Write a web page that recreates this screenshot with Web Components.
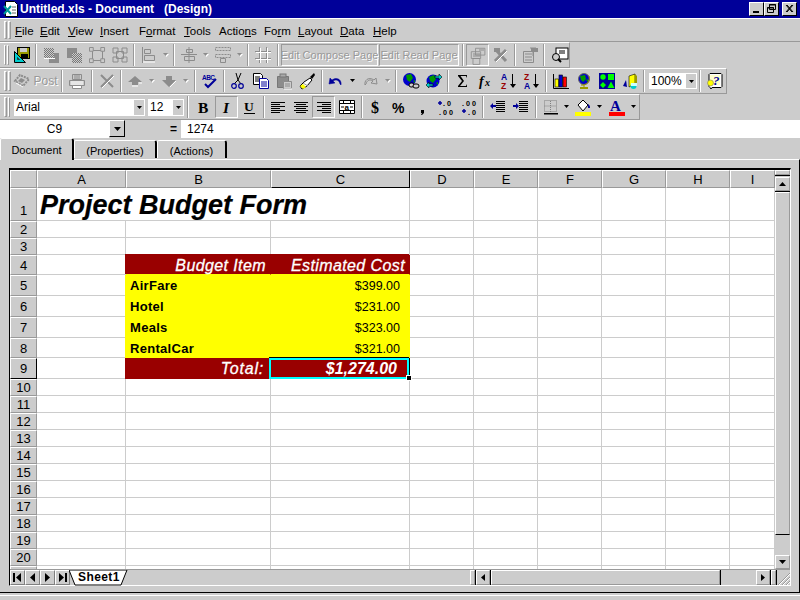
<!DOCTYPE html>
<html>
<head>
<meta charset="utf-8">
<title>Untitled.xls</title>
<style>
  html, body { margin: 0; padding: 0; background: #ccc; }
</style>
</head>
<body>
<xl-app>
  <title-bar>Untitled.xls - Document   (Design)</title-bar>
  <menu-bar>
    <menu-item w="25" key="0">File</menu-item>
    <menu-item w="28" key="0">Edit</menu-item>
    <menu-item w="32" key="0">View</menu-item>
    <menu-item w="39" key="0">Insert</menu-item>
    <menu-item w="45" key="1">Format</menu-item>
    <menu-item w="35" key="0">Tools</menu-item>
    <menu-item w="45" key="5">Actions</menu-item>
    <menu-item w="34" key="2">Form</menu-item>
    <menu-item w="42" key="0">Layout</menu-item>
    <menu-item w="33" key="0">Data</menu-item>
    <menu-item w="30" key="0">Help</menu-item>
  </menu-bar>

  <tool-bar w="570">
    <tb-btn icon="save"></tb-btn><tb-sep></tb-sep>
    <tb-btn icon="front"></tb-btn><tb-btn icon="back"></tb-btn><tb-btn icon="group"></tb-btn><tb-btn icon="ungroup"></tb-btn><tb-sep></tb-sep>
    <tb-btn icon="alignv"></tb-btn><tb-arrow off></tb-arrow><tb-sep></tb-sep>
    <tb-btn icon="alignh"></tb-btn><tb-arrow off></tb-arrow>
    <tb-btn icon="spread"></tb-btn><tb-arrow off></tb-arrow><tb-sep></tb-sep>
    <tb-btn icon="gridlines"></tb-btn><tb-sep w="7"></tb-sep>
    <tb-text w="97">Edit Compose Page</tb-text><tb-text w="80" gap="1">Edit Read Page</tb-text><tb-sep w="7"></tb-sep>
    <tb-btn icon="form" pressed></tb-btn><tb-btn icon="tools"></tb-btn><tb-sep></tb-sep>
    <tb-btn icon="props"></tb-btn><tb-sep></tb-sep>
    <tb-btn icon="preview"></tb-btn>
  </tool-bar>

  <tool-bar w="727">
    <tb-btn w="46" icon="post" label="Post"></tb-btn><tb-sep></tb-sep>
    <tb-btn w="24" icon="print"></tb-btn><tb-sep></tb-sep>
    <tb-btn icon="cross"></tb-btn><tb-sep w="5"></tb-sep>
    <tb-btn icon="up"></tb-btn><tb-arrow off></tb-arrow>
    <tb-btn icon="down"></tb-btn><tb-arrow off></tb-arrow><tb-sep w="7"></tb-sep>
    <tb-btn icon="spell"></tb-btn><tb-sep w="5"></tb-sep>
    <tb-btn icon="cut"></tb-btn><tb-btn icon="copy"></tb-btn><tb-btn icon="paste"></tb-btn><tb-btn icon="brush"></tb-btn><tb-sep w="7"></tb-sep>
    <tb-btn w="21" icon="undo"></tb-btn><tb-arrow w="12"></tb-arrow>
    <tb-btn icon="redo"></tb-btn><tb-arrow w="12" off></tb-arrow><tb-sep></tb-sep>
    <tb-btn icon="globelink"></tb-btn><tb-btn icon="globeweb"></tb-btn><tb-sep></tb-sep>
    <tb-btn icon="sigma"></tb-btn><tb-btn icon="fx"></tb-btn><tb-btn icon="az"></tb-btn><tb-btn icon="za"></tb-btn><tb-sep></tb-sep>
    <tb-btn icon="chart"></tb-btn><tb-btn icon="map"></tb-btn><tb-btn icon="shapes"></tb-btn><tb-btn icon="office"></tb-btn><tb-sep></tb-sep>
    <tb-combo w="48" gap="2" arrow="11" h="16">100%</tb-combo><tb-sep w="6"></tb-sep>
    <tb-btn icon="help"></tb-btn>
  </tool-bar>

  <tool-bar w="640">
    <tb-combo w="131" gap="2" arrow="11">Arial</tb-combo>
    <tb-combo w="36" gap="3" arrow="11">12</tb-combo><tb-sep w="8"></tb-sep>
    <tb-btn icon="bold"></tb-btn><tb-btn icon="italic" pressed></tb-btn><tb-btn icon="under"></tb-btn><tb-sep w="5"></tb-sep>
    <tb-btn icon="left"></tb-btn><tb-btn icon="center"></tb-btn><tb-btn icon="right" pressed></tb-btn><tb-btn icon="merge"></tb-btn><tb-sep w="7"></tb-sep>
    <tb-btn icon="dollar"></tb-btn><tb-btn icon="percent"></tb-btn><tb-btn icon="comma"></tb-btn><tb-btn icon="incdec"></tb-btn><tb-btn icon="decdec"></tb-btn><tb-sep></tb-sep>
    <tb-btn icon="outdent"></tb-btn><tb-btn icon="indent"></tb-btn><tb-sep w="7"></tb-sep>
    <tb-btn icon="borders"></tb-btn><tb-arrow w="9"></tb-arrow>
    <tb-btn icon="fill"></tb-btn><tb-arrow></tb-arrow>
    <tb-btn icon="fontcolor"></tb-btn><tb-arrow></tb-arrow>
  </tool-bar>

  <formula-bar name="C9" value="1274"></formula-bar>

  <tab-strip>
    <tab-item w="74" active>Document</tab-item>
    <tab-item w="83">(Properties)</tab-item>
    <tab-item w="70">(Actions)</tab-item>
  </tab-strip>

  <sheet-panel>
    <sheet-grid slot="grid"></sheet-grid>
    <v-scroll slot="vscroll"></v-scroll>
    <sheet-footer slot="footer"></sheet-footer>
  </sheet-panel>
</xl-app>

<script>
// checker used by the greyed out toolbar icons
const DITHER = '<pattern id="dt" width="2" height="2" patternUnits="userSpaceOnUse"><rect width="2" height="2" fill="#ccc"/><rect width="1" height="1" fill="#777"/><rect x="1" y="1" width="1" height="1" fill="#777"/></pattern>';
const GR = '#8c8c8c';
const lines = (arr, c) => arr.map(([x, y, w]) => `<rect x="${x}" y="${y}" width="${w}" height="1" fill="${c}"/>`).join('');

const ICONS = {
  save: `<rect x="3" y="0" width="13" height="12" fill="#000"/><rect x="4" y="1" width="11" height="10" fill="#999900"/><rect x="6" y="1" width="7" height="4" fill="#ccc"/><rect x="7" y="7" width="7" height="4" fill="#000"/><path d="M.5 4.5v11h11z" fill="#00cccc" stroke="#000"/><path d="M3.5 10.5v2h2z" fill="#ccc" stroke="#000" stroke-width=".7"/>`,
  front: `${DITHER}<rect x="6" y="6" width="10" height="10" fill="${GR}"/><rect x="1" y="1" width="10" height="10" fill="url(#dt)"/><path d="M11 11.5h1M1 11.5h10" stroke="#fff"/>`,
  back: `${DITHER}<rect x="1" y="1" width="10" height="10" fill="${GR}"/><rect x="6" y="6" width="10" height="10" fill="url(#dt)"/>`,
  group: `<path d="M3.5 3.5h10v10h-10z" fill="none" stroke="${GR}"/><path d="M0 0h4v4H0zM12 0h4v4h-4zM0 12h4v4H0zM12 12h4v4h-4z" fill="#ccc" stroke="${GR}" transform="translate(.5 .5) scale(.94)"/>`,
  ungroup: `<path d="M4.5 4.5h7v7h-7z" fill="none" stroke="${GR}"/><path d="M1 1h5v5H1zM10 1h5v5h-5zM1 10h5v5H1zM10 10h5v5h-5z" fill="none" stroke="${GR}"/>`,
  alignv: `<path d="M1.5 0v16" stroke="${GR}"/><path d="M3.5 2.5h6v4h-6zM3.5 8.5h10v5h-10z" fill="#ccc" stroke="${GR}"/><path d="M2 15h12" stroke="#fff"/>`,
  alignh: `<path d="M0 7.5h16" stroke="${GR}"/><path d="M5.5 2.5h6v3h-6zM3.5 9.5h10v4h-10z" fill="#ccc" stroke="${GR}"/><path d="M8 0v16" stroke="${GR}"/>`,
  spread: `<path d="M.5 .5h15v3H.5zM.5 7.5h15v3H.5z" fill="none" stroke="${GR}" stroke-dasharray="2 1"/><path d="M5.5 11.5h5v4h-5z" fill="#ccc" stroke="${GR}"/>`,
  gridlines: `<path d="M4.5 0v16M11.5 0v16M0 4.5h16M0 11.5h16" stroke="${GR}"/><path d="M5.5 1v15M12.5 1v15M1 5.5h15M1 12.5h15" stroke="#fff"/>`,
  form: `<path d="M6.5 1.5h11v8h-11zM1.5 5.5h11v8h-11zM3.5 13.5h8v7h-8z" fill="#ccc" stroke="${GR}" transform="scale(.85)"/><path d="M3 7h7M3 9h7M9 3h5" stroke="${GR}"/>`,
  tools: `<path d="M2 14L13 3M3 3l10 11" stroke="${GR}" stroke-width="3"/><path d="M3 15L14 4" stroke="#fff"/><rect x="1" y="1" width="6" height="4" fill="${GR}"/>`,
  props: `<path d="M1.5 4.5h10v11h-10z" fill="#ccc" stroke="${GR}"/><path d="M3 7h7M3 10h7M3 13h7M8 1h6M11 1v8" stroke="${GR}"/><rect x="9" y="1" width="7" height="4" fill="${GR}"/>`,
  preview: `<rect x="5" y="1" width="12" height="11" fill="#fff" stroke="#000"/><path d="M8 4h6M8 6h6" stroke="#000"/><circle cx="5" cy="10" r="3.5" fill="#ccc" stroke="#000"/><path d="M7 12l3 3" stroke="#000" stroke-width="2"/>`,
  post: `<path d="M1 8l5-6 9 4-6 7z" fill="none" stroke="${GR}" stroke-width="2" stroke-dasharray="2 1"/><path d="M4 8l3-3 4 2-3 3z" fill="${GR}"/><path d="M2 10l7 4" stroke="#fff"/>`,
  print: `<path d="M3.5 1.5h9v5h-9z" fill="#ccc" stroke="${GR}"/><path d="M5 3h6M5 5h6" stroke="${GR}"/><path d="M.5 7.5h15v5H.5z" fill="#ccc" stroke="${GR}"/><path d="M2 9h12M2 11h12" stroke="#fff"/><path d="M3.5 12.5h9v3h-9z" fill="#fff" stroke="${GR}"/>`,
  cross: `<path d="M2 2l12 12M14 2L2 14" stroke="${GR}" stroke-width="2"/><path d="M3 15L15 3" stroke="#fff"/>`,
  up: `<path d="M8 3L1 9h4v3h6V9h4z" fill="${GR}"/><path d="M5 13h6M12 10h3" stroke="#fff"/>`,
  down: `<path d="M8 14L1 7h4V3h6v4h4z" fill="${GR}"/><path d="M9 14l6-6" stroke="#fff"/>`,
  spell: `<text x="0" y="6.5" font-family="Liberation Sans" font-size="6.5" font-weight="bold" fill="#000099" textLength="13">ABC</text><path d="M3 11l3 3 8-8" fill="none" stroke="#000099" stroke-width="2"/>`,
  cut: `<path d="M6 0l2 7M11 0L8 7M8 7L4 11M8 7l3 4" fill="none" stroke="#000"/><circle cx="4" cy="13" r="2.3" fill="none" stroke="#000099" stroke-width="1.2"/><circle cx="11" cy="13" r="2.3" fill="none" stroke="#000099" stroke-width="1.2"/>`,
  copy: `<path d="M.5 .5h7l2 2v9H.5z" fill="#fff" stroke="#000"/><path d="M2 4h5M2 6h5M2 8h5" stroke="#000"/><path d="M6.5 5.5h7l2 2v8h-9z" fill="#fff" stroke="#000099"/><path d="M8 9h6M8 11h6M8 13h6" stroke="#000099"/>`,
  paste: `<path d="M1.5 3.5h11v11h-11z" fill="${GR}" stroke="#777"/><rect x="4" y="1" width="6" height="3" fill="#aaa" stroke="#777"/><path d="M7.5 8.5h8v7h-8z" fill="#ccc" stroke="${GR}"/><path d="M9 11h5M9 13h5" stroke="${GR}"/><path d="M8 16h8" stroke="#fff"/>`,
  brush: `<path d="M11 5l2 2-5 6-5 3-2-3 4-4z" fill="#fff" stroke="#000"/><path d="M1 13l3 3 3-2-3-3z" fill="#ffff00"/><path d="M11 4l4-4 1 2-3 4z" fill="#000"/><path d="M4 10l5 3" stroke="#999"/>`,
  undo: `<path d="M2 5l-1 6 6-1-2-2c3-2 6-1 7 3l1 1c1-4-3-9-9-5z" fill="#000099" stroke="#000099" stroke-width=".5"/>`,
  redo: `<path d="M14 5l1 6-6-1 2-2c-3-2-6-1-7 3l-1 1C2 8 6 3 12 7z" fill="#ccc" stroke="${GR}"/>`,
  globelink: `<circle cx="6.5" cy="6.5" r="6.5" fill="#0000cc"/><path d="M3 2l5-1 2 4-3 4-3-2zM10 8l2-1 0 3z" fill="#009900"/><rect x="6" y="10" width="5" height="4" rx="2" fill="#ccc" stroke="#000"/><rect x="10" y="11" width="6" height="4" rx="2" fill="#ccc" stroke="#000"/>`,
  globeweb: `<circle cx="7" cy="8" r="6.5" fill="#0000cc"/><path d="M3 4l5-2 2 4-3 4-3-2zM10 10l2-1 0 3z" fill="#009900"/><path d="M9 3h4V1l3 3-3 3V5H9zM7 11H3V9l-3 3 3 3v-2h4z" fill="#00cccc" stroke="#000" stroke-width=".6"/>`,
  sigma: `<path d="M3 2h9v3l-1-2H5.500L9 8l-4 5h6l1-2v3H3v-1l4-5-4-5z" fill="#000"/>`,
  fx: `<text x="1" y="13" font-family="Liberation Serif" font-size="14" font-style="italic" font-weight="bold" fill="#000">f</text><text x="7" y="13" font-family="Liberation Serif" font-size="10" font-style="italic" font-weight="bold" fill="#000">x</text>`,
  az: `<text x="0" y="7" font-family="Liberation Sans" font-size="8.5" font-weight="bold" fill="#000099">A</text><text x="0" y="15.5" font-family="Liberation Sans" font-size="8.5" font-weight="bold" fill="#990000">Z</text><path d="M11.5 1v13" stroke="#000" stroke-width="1"/><path d="M9 11h6l-3 4z" fill="#000"/>`,
  za: `<text x="0" y="7" font-family="Liberation Sans" font-size="8.5" font-weight="bold" fill="#990000">Z</text><text x="0" y="15.5" font-family="Liberation Sans" font-size="8.5" font-weight="bold" fill="#000099">A</text><path d="M11.5 1v13" stroke="#000"/><path d="M9 11h6l-3 4z" fill="#000"/>`,
  chart: `<path d="M.5 1v14.5H16" fill="none" stroke="#000"/><rect x="2" y="6" width="3.5" height="8" fill="#ffff00" stroke="#000" stroke-width=".6"/><rect x="6" y="2" width="3.5" height="12" fill="#0000cc" stroke="#000" stroke-width=".6"/><rect x="10" y="4" width="3.5" height="10" fill="#ff0000" stroke="#000" stroke-width=".6"/>`,
  map: `<circle cx="8" cy="6" r="5.5" fill="#0000cc" stroke="#666"/><path d="M4 3l5-1 1 4-3 3-2-2zM10 7l2-1 0 3z" fill="#009900"/><path d="M13 3a7 7 0 0 1-8 9M8 12v2" fill="none" stroke="#999900"/><path d="M4 15h8" stroke="#999900" stroke-width="2"/>`,
  shapes: `<rect width="16" height="16" fill="#000099"/><circle cx="4" cy="4" r="2.7" fill="#00ff00"/><rect x="9" y="1" width="6" height="6" fill="#00ff00"/><path d="M4 9l3 3-3 3-3-3zM12 8.500l3.500 6.500h-7z" fill="#00ff00"/>`,
  office: `<path d="M7 3l6-2v10l-6 3z" fill="#ffff00" stroke="#000" stroke-width=".6"/><path d="M13 1l2 2v9l-2-1z" fill="#999900"/><path d="M1 13l3-6 1 7z" fill="#000099"/><circle cx="11.500" cy="13" r="3" fill="#00cccc"/><rect x="9" y="10" width="6" height="3" fill="#ccffff"/>`,
  help: `<path d="M3 .5h11l1 1v12l-1 1H5l-1 1.500-1-1.500-1-1V1.500z" fill="#fff" stroke="#000"/><path d="M3 2h10v10H3z" fill="#ffffcc"/><text x="6" y="12" font-family="Liberation Serif" font-size="13" font-weight="bold" font-style="italic" fill="#000099">?</text><circle cx="3.500" cy="10" r="3" fill="#ffff00" stroke="#666" stroke-width=".5"/>`,
  bold: `<text x="2" y="14" font-family="Liberation Serif" font-size="15.500" font-weight="bold" fill="#000">B</text>`,
  italic: `<text x="4" y="14" font-family="Liberation Serif" font-size="15.500" font-weight="bold" font-style="italic" fill="#000">I</text>`,
  under: `<text x="2" y="12" font-family="Liberation Serif" font-size="13.500" font-weight="bold" fill="#000">U</text><rect x="2" y="14" width="11" height="1" fill="#000"/>`,
  left: lines([[1,3,14],[1,5,9],[1,7,14],[1,9,9],[1,11,14],[1,13,9]], '#000'),
  center: lines([[1,3,14],[3,5,10],[1,7,14],[3,9,10],[1,11,14],[3,13,10]], '#000'),
  right: lines([[1,3,14],[6,5,9],[1,7,14],[6,9,9],[1,11,14],[6,13,9]], '#000'),
  merge: `<path d="M.5 1.500h15v13H.5z" fill="#fff" stroke="#000"/><path d="M1 4.500h14M1 11.500h14M4.500 2v3M4.500 11v3M11.500 2v3M11.500 11v3" stroke="#000"/><path d="M2 8h3M14 8h-3" stroke="#000"/><text x="5.500" y="11" font-family="Liberation Sans" font-size="8" font-weight="bold" fill="#000">a</text>`,
  dollar: `<text x="2" y="14" font-family="Liberation Serif" font-size="16" font-weight="bold" fill="#000">$</text>`,
  percent: `<text x="0" y="13.500" font-family="Liberation Sans" font-size="14" font-weight="bold" fill="#000" textLength="15">%</text>`,
  comma: `<path d="M6 11h3v3l-2 2H6l1-2H6z" fill="#000"/>`,
  incdec: `<path d="M0 4h4M2 2v4" stroke="#000099" stroke-width="1.500"/><text x="5" y="6.500" font-family="Liberation Sans" font-size="7.200" font-weight="bold" fill="#000" textLength="8">.0</text><text x="1" y="15.500" font-family="Liberation Sans" font-size="7.200" font-weight="bold" fill="#000" textLength="14">.00</text>`,
  decdec: `<text x="1" y="6.500" font-family="Liberation Sans" font-size="7.200" font-weight="bold" fill="#000" textLength="14">.00</text><path d="M1 12h4M3 10v4" stroke="#000099" stroke-width="1.500"/><text x="7" y="15.500" font-family="Liberation Sans" font-size="7.200" font-weight="bold" fill="#000" textLength="8">.0</text>`,
  outdent: `${lines([[6,2,9],[6,4,9],[6,6,9],[6,8,9],[6,10,9],[6,12,9]], '#000')}<path d="M0 7l3-3v2h3v2H3v2z" fill="#000099"/>`,
  indent: `${lines([[6,2,9],[6,4,9],[6,6,9],[6,8,9],[6,10,9],[6,12,9]], '#000')}<path d="M6 7L3 4v2H0v2h3v2z" fill="#000099"/>`,
  borders: `<path d="M1.500 1.500h12v11h-12zM1.500 7h12M7.500 2v11" fill="none" stroke="#808080" stroke-dasharray="1 1"/><rect x="1" y="14" width="14" height="1.500" fill="#000"/>`,
  fill: `<path d="M3 6l5-5 5 5-5 6z" fill="#fff" stroke="#000"/><path d="M13 5c2 1 2 3 2 4h-2z" fill="#000099"/><rect x="0" y="13" width="16" height="4" fill="#ffff00"/>`,
  fontcolor: `<text x="1" y="12" font-family="Liberation Serif" font-size="15" font-weight="bold" fill="#000099">A</text><rect x="0" y="13" width="16" height="4" fill="#ff0000"/>`
};

class XlApp extends HTMLElement {
  constructor() {
    super();
    this.attachShadow({ mode: 'open' });
    this.shadowRoot.innerHTML = `
      <style>
        :host { display: flex; flex-direction: column; width: 800px; height: 600px; overflow: hidden; background: #ccc;
                font: 11px "Liberation Sans", Arial, sans-serif; color: #000; }
      </style>
      <slot></slot>`;
  }
}

class TitleBar extends HTMLElement {
  constructor() {
    super();
    this.attachShadow({ mode: 'open' });
    this.shadowRoot.innerHTML = `
      <style>
        :host { display: flex; align-items: center; height: 18px; background: #000099; color: #fff; flex: none;
                font: bold 12px "Liberation Sans", Arial, sans-serif; white-space: pre; box-sizing: border-box; padding: 0 3px; }
        svg.logo { width: 16px; height: 16px; margin-right: 1px; }
        .txt { flex: 1; }
        .w { width: 15px; height: 14px; background: #ccc; box-sizing: border-box; border: 1px solid; border-color: #fff #000 #000 #fff; display: flex; }
        .w svg { width: 13px; height: 12px; }
        .close { margin-left: 3px; }
      </style>
      <svg class="logo" viewBox="0 0 16 16"><path d="M2.500 .5h9l3 3v12h-12z" fill="#fff" stroke="#000"/><path d="M1 5l7 8M8 5l-7 8" stroke="#009999" stroke-width="2"/><path d="M9 6h4M9 9h4M9 12h4" stroke="#666"/></svg>
      <span class="txt"><slot></slot></span>
      <div class="w"><svg viewBox="0 0 13 12"><rect x="3" y="8" width="6" height="2" fill="#000"/></svg></div>
      <div class="w"><svg viewBox="0 0 13 12"><path d="M4.500 1.500h6v5h-6zM2.500 4.500h6v5h-6z" fill="#ccc" stroke="#000"/><path d="M4 2h7M2 5h7" stroke="#000"/></svg></div>
      <div class="w close"><svg viewBox="0 0 13 12"><path d="M3 2l6 7M9 2l-6 7M4 2l6 7M10 2l-6 7" stroke="#000"/></svg></div>`;
  }
}

class MenuBar extends HTMLElement {
  constructor() {
    super();
    this.attachShadow({ mode: 'open' });
    this.shadowRoot.innerHTML = `
      <style>
        :host { display: flex; align-items: center; height: 24px; flex: none; box-sizing: border-box; padding-left: 4px;
                background: #ccc; border-top: 1px solid #fff; border-bottom: 1px solid #999; }
        .grip { width: 3px; height: 18px; margin-right: 1px; border: 1px solid; border-color: #fff #999 #999 #fff; box-sizing: border-box; }
        .sp { width: 3px; }
      </style>
      <div class="grip"></div><div class="grip"></div><div class="sp"></div><slot></slot>`;
  }
}

class MenuItem extends HTMLElement {
  constructor() {
    super();
    this.attachShadow({ mode: 'open' });
  }
  connectedCallback() {
    const t = this.textContent;
    const k = +this.getAttribute('key');
    this.shadowRoot.innerHTML = `
      <style>
        :host { display: block; width: ${this.getAttribute('w')}px; font-size: 11.5px; white-space: nowrap; padding-top: 2px; }
        u { text-underline-offset: 1px; }
      </style>
      ${t.slice(0, k)}<u>${t[k]}</u>${t.slice(k + 1)}`;
  }
}

class ToolBar extends HTMLElement {
  constructor() {
    super();
    this.attachShadow({ mode: 'open' });
  }
  connectedCallback() {
    this.shadowRoot.innerHTML = `
      <style>
        :host { display: flex; align-items: center; flex: none; height: 26px; width: ${this.getAttribute('w')}px; box-sizing: border-box;
                padding-left: 4px; background: #ccc; border-top: 1px solid #fff; border-bottom: 1px solid #999; border-right: 1px solid #999; }
        .grip { width: 3px; height: 20px; margin-right: 1px; border: 1px solid; border-color: #fff #999 #999 #fff; box-sizing: border-box; }
        .sp { width: 2px; }
      </style>
      <div class="grip"></div><div class="grip"></div><div class="sp"></div><slot></slot>`;
  }
}

class TbBtn extends HTMLElement {
  constructor() {
    super();
    this.attachShadow({ mode: 'open' });
  }
  connectedCallback() {
    const w = this.getAttribute('w') || 23;
    const label = this.getAttribute('label');
    const pressed = this.hasAttribute('pressed');
    this.shadowRoot.innerHTML = `
      <style>
        :host { display: flex; flex: none; align-items: center; justify-content: center; width: ${w}px; height: 22px; box-sizing: border-box;
                ${pressed ? 'border: 1px solid; border-color: #999 #fff #fff #999;' : ''} }
        svg { width: 16px; height: 16px; overflow: visible; flex: none; }
        span { color: #999; text-shadow: 1px 1px 0 #fff; font-size: 12px; margin-left: 3px; }
      </style>
      <svg viewBox="0 0 16 16">${ICONS[this.getAttribute('icon')] || ''}</svg>${label ? `<span>${label}</span>` : ''}`;
  }
}

class TbSep extends HTMLElement {
  constructor() {
    super();
    this.attachShadow({ mode: 'open' });
  }
  connectedCallback() {
    this.shadowRoot.innerHTML = `
      <style>
        :host { display: flex; flex: none; justify-content: center; width: ${this.getAttribute('w') || 6}px; height: 22px; }
        i { display: block; width: 2px; box-sizing: border-box; border-left: 1px solid #999; border-right: 1px solid #fff; }
      </style><i></i>`;
  }
}

class TbArrow extends HTMLElement {
  constructor() {
    super();
    this.attachShadow({ mode: 'open' });
  }
  connectedCallback() {
    const off = this.hasAttribute('off');
    this.shadowRoot.innerHTML = `
      <style>
        :host { display: flex; flex: none; align-items: center; justify-content: center; width: ${this.getAttribute('w') || 11}px; height: 22px; }
        svg { width: 5px; height: 4px; overflow: visible; }
      </style>
      <svg viewBox="0 0 5 4">${off ? '<path d="M1 1h5L3.500 4z" fill="#fff"/>' : ''}<path d="M0 0h5L2.500 3z" fill="${off ? '#8c8c8c' : '#000'}"/></svg>`;
  }
}

class TbText extends HTMLElement {
  constructor() {
    super();
    this.attachShadow({ mode: 'open' });
  }
  connectedCallback() {
    this.shadowRoot.innerHTML = `
      <style>
        :host { display: flex; flex: none; align-items: center; justify-content: center; box-sizing: border-box; white-space: nowrap;
                width: ${this.getAttribute('w')}px; height: 22px; margin-left: ${this.getAttribute('gap') || 0}px;
                border: 1px solid; border-color: #999 #fff #fff #999; color: #999; text-shadow: 1px 1px 0 #fff; font-size: 11px; }
      </style><slot></slot>`;
  }
}

class TbCombo extends HTMLElement {
  constructor() {
    super();
    this.attachShadow({ mode: 'open' });
  }
  connectedCallback() {
    this.shadowRoot.innerHTML = `
      <style>
        :host { display: flex; flex: none; box-sizing: border-box; background: #fff; align-items: center; height: ${this.getAttribute('h') || 17}px;
                width: ${this.getAttribute('w')}px; margin-left: ${this.getAttribute('gap') || 0}px; font-size: 12px; }
        .t { flex: 1; padding-left: 2px; white-space: nowrap; overflow: hidden; }
        .a { flex: none; box-sizing: border-box; width: ${this.getAttribute('arrow')}px; height: 100%; background: #ccc; border: 1px solid #fff; border-left: none; display: flex; align-items: center; justify-content: center; }
        svg { width: 5px; height: 3px; }
      </style>
      <div class="t"><slot></slot></div>
      <div class="a"><svg viewBox="0 0 5 3"><path d="M0 0h5L2.500 3z" fill="#000"/></svg></div>`;
  }
}

class FormulaBar extends HTMLElement {
  constructor() {
    super();
    this.attachShadow({ mode: 'open' });
  }
  connectedCallback() {
    this.shadowRoot.innerHTML = `
      <style>
        :host { display: flex; flex: none; height: 18px; font-size: 12px; align-items: stretch; }
        .name { width: 109px; background: #fff; text-align: center; line-height: 18px; }
        .drop { width: 16px; height: 17px; box-sizing: border-box; background: #ccc; border: 1px solid; border-color: #fff #000 #000 #fff; display: flex; align-items: center; justify-content: center; }
        .drop svg { width: 7px; height: 4px; }
        .eq { width: 56px; text-align: right; padding-right: 4px; box-sizing: border-box; font-weight: bold; line-height: 18px; font-size: 12px; }
        .val { flex: 1; background: #fff; padding-left: 6px; line-height: 18px; }
      </style>
      <div class="name">${this.getAttribute('name')}</div>
      <div class="drop"><svg viewBox="0 0 7 4"><path d="M0 0h7L3.500 4z" fill="#000"/></svg></div>
      <div class="eq">=</div>
      <div class="val">${this.getAttribute('value')}</div>`;
  }
}

class TabStrip extends HTMLElement {
  constructor() {
    super();
    this.attachShadow({ mode: 'open' });
    this.shadowRoot.innerHTML = `
      <style>
        :host { display: flex; flex: none; height: 21px; align-items: flex-end; background: #ccc; position: relative; z-index: 1; }
      </style><slot></slot>`;
  }
}

class TabItem extends HTMLElement {
  constructor() {
    super();
    this.attachShadow({ mode: 'open' });
  }
  connectedCallback() {
    const on = this.hasAttribute('active');
    this.shadowRoot.innerHTML = `
      <style>
        :host { display: flex; flex: none; align-items: center; justify-content: center; box-sizing: border-box; width: ${this.getAttribute('w')}px;
                height: ${on ? 22 : 18}px; ${on ? 'margin-bottom:-1px; background:#ccc;' : 'margin-bottom: 1px; padding-top: 2px;'}
                border-top: 1px solid #fff; border-left: 1px solid #fff; border-right: 2px solid #000; border-radius: 2px 3px 0 0; font-size: 11px; }
      </style><slot></slot>`;
  }
}

class SheetPanel extends HTMLElement {
  constructor() {
    super();
    this.attachShadow({ mode: 'open' });
    this.shadowRoot.innerHTML = `
      <style>
        :host { display: block; flex: none; height: 441px; background: #ccc; }
        .inner { box-sizing: border-box; border-top: 1px solid #fff; border-right: 1px solid #000; border-bottom: 1px solid #000; padding: 8px 0 6px 9px; }
        .frame { display: grid; grid-template-columns: 765px 15px; grid-template-rows: 399px 16px; border-top: 2px solid #000; border-left: 1px solid #000; border-bottom: 1px solid #fff; border-right: 1px solid #fff; width: 782px; box-sizing: border-box; }
        .status { margin-top: 2px; border-top: 1px solid #fff; }
        ::slotted([slot="footer"]) { grid-column: 1 / 3; }
      </style>
      <div class="inner"><div class="frame"><slot name="grid"></slot><slot name="vscroll"></slot><slot name="footer"></slot></div></div>
      <div class="status"></div>`;
  }
}

class SheetGrid extends HTMLElement {
  constructor() {
    super();
    this.attachShadow({ mode: 'open' });
    const cols = [['A', 89], ['B', 145], ['C', 139], ['D', 64], ['E', 64], ['F', 64], ['G', 64], ['H', 64], ['I', 45]];
    const rowH = [33, 17, 17, 20, 21, 21, 21, 20, 21, 17, 17, 17, 17, 17, 17, 17, 17, 17, 17, 17, 17];
    const red = 'fill red', yel = 'fill yel';
    // cells with content or a fill, key is column + row
    const data = {
      A1: { cls: 'title nolines', t: 'Project Budget Form' }, B1: { cls: 'nolines' },
      B4: { cls: `${red} top hd`, t: 'Budget Item' }, C4: { cls: `${red} top hd`, t: 'Estimated Cost' },
      B5: { cls: `${yel} item`, t: 'AirFare' }, C5: { cls: `${yel} val`, t: '$399.00' },
      B6: { cls: `${yel} item`, t: 'Hotel' }, C6: { cls: `${yel} val`, t: '$231.00' },
      B7: { cls: `${yel} item`, t: 'Meals' }, C7: { cls: `${yel} val`, t: '$323.00' },
      B8: { cls: `${yel} item short`, t: 'RentalCar' }, C8: { cls: `${yel} val short`, t: '$321.00' },
      B9: { cls: `${red} tot`, t: 'Total:' }, C9: { cls: `${red} sum sel`, t: '$1,274.00' }
    };
    let html = '<div class="corner"></div>';
    cols.forEach(([c]) => { html += `<div class="hdr ${c === 'C' ? 'on' : ''}">${c}</div>`; });
    rowH.forEach((h, i) => {
      const r = i + 1;
      html += `<div class="hdr rh ${r === 9 ? 'on' : ''} ${r === 1 ? 'end' : ''}">${r < 21 ? r : ''}</div>`;
      cols.forEach(([c]) => {
        const d = data[c + r] || {};
        let cls = d.cls || '';
        if (r === 4 && d.t) cls += ' btm-yel';
        html += `<div class="c ${cls}"><span>${d.t || ''}</span>${cls.includes('sel') ? '<b class="selbox"></b><b class="handle"></b>' : ''}</div>`;
      });
    });
    this.shadowRoot.innerHTML = `
      <style>
        :host { display: grid; overflow: hidden; background: #fff; height: 399px;
                grid-template-columns: 27px ${cols.map(c => c[1] + 'px').join(' ')};
                grid-template-rows: 18px ${rowH.map(h => h + 'px').join(' ')}; }
        .corner, .hdr { background: #ccc; box-sizing: border-box; border: 1px solid; border-color: #fff #999 #999 #fff; }
        .hdr { display: flex; align-items: center; justify-content: center; font-size: 13px; }
        .hdr.end { align-items: flex-end; padding-bottom: 2px; }
        .hdr.on { border-color: #fff #000 #000 #fff; }
        .c { position: relative; box-sizing: border-box; border-right: 1px solid #ccc; border-bottom: 1px solid #ccc; display: flex; align-items: flex-end; white-space: nowrap; }
        .fill { box-shadow: -1px 0 0 var(--f); background: var(--f); border-color: var(--f); }
        .red { --f: #990000; color: #fff; justify-content: flex-end; }
        .yel { --f: #ffff00; }
        .top { box-shadow: -1px -1px 0 var(--f); }
        .btm-yel { border-bottom-color: #ffff00; }
        .nolines { border-right: none; }
        .title { font: italic bold 27px/29px "Liberation Sans", Arial, sans-serif; padding-left: 3px; -webkit-text-stroke: .2px #000; }
        .title span { position: relative; z-index: 2; }
        .hd { font: italic 16px "Liberation Sans", Arial, sans-serif; padding: 2px 4px 0 0; align-items: center; letter-spacing: .4px; -webkit-text-stroke: .3px #fff; }
        .item { font: bold 13px "Liberation Sans", Arial, sans-serif; padding-left: 4px; padding-bottom: 2px; letter-spacing: .3px; }
        .val { font: 12.5px "Liberation Sans", Arial, sans-serif; justify-content: flex-end; padding-right: 9px; padding-bottom: 2px; }
        .short { padding-bottom: 1px; }
        .tot { font: italic 16px "Liberation Sans", Arial, sans-serif; padding: 2px 6px 0 0; align-items: center; letter-spacing: .8px; -webkit-text-stroke: .3px #fff; }
        .sum { font: italic bold 16px "Liberation Sans", Arial, sans-serif; padding: 2px 12px 0 0; align-items: center; }
        .selbox { position: absolute; left: -2px; top: 0; right: 0; bottom: -1px; border: 2px solid #00ffff; box-shadow: 0 -1px 0 #000, 1px 0 0 #000; }
        .handle { position: absolute; right: -3px; bottom: -3px; width: 4px; height: 4px; background: #000; border: 1px solid #fff; z-index: 3; }
      </style>${html}`;
  }
}

class VScroll extends HTMLElement {
  constructor() {
    super();
    this.attachShadow({ mode: 'open' });
    this.shadowRoot.innerHTML = `
      <style>
        :host { display: flex; flex-direction: column; height: 399px; width: 15px; background: #ccc; box-sizing: border-box; }
        div { box-sizing: border-box; }
        .split { height: 5px; border: 1px solid; border-color: #fff #999 #999 #fff; }
        .bl { height: 1px; background: #000; flex: none; }
        .btn { height: 14px; flex: none; border: 1px solid; border-color: #fff #999 #999 #fff; display: flex; align-items: center; justify-content: center; }
        .btn svg { width: 7px; height: 4px; }
        .thumb { height: 343px; flex: none; border: 1px solid; border-color: #fff #999 #000 #fff; }
        .track { flex: 1; }
      </style>
      <div class="split"></div><div class="bl"></div><div style="height:1px"></div>
      <div class="btn"><svg viewBox="0 0 7 4"><path d="M3.500 0L7 4H0z" fill="#000"/></svg></div><div class="bl"></div>
      <div class="thumb"></div><div class="track"></div>
      <div class="btn"><svg viewBox="0 0 7 4"><path d="M0 0h7L3.500 4z" fill="#000"/></svg></div>`;
  }
}

class SheetFooter extends HTMLElement {
  constructor() {
    super();
    this.attachShadow({ mode: 'open' });
    const nav = ['<path d="M0 0h2v9H0zM8 0v9L3 4.500z"/>', '<path d="M7 0v9L2 4.500z"/>', '<path d="M2 0v9l5-4.500z"/>', '<path d="M1 0v9l5-4.500zM7 0h2v9H7z"/>'];
    this.shadowRoot.innerHTML = `
      <style>
        :host { display: flex; height: 16px; background: #ccc; align-items: stretch; box-sizing: border-box; border-top: 1px solid #999; }
        .nav { width: 15px; flex: none; box-sizing: border-box; border: 1px solid; border-color: #fff #808080 #808080 #fff; display: flex; align-items: center; justify-content: center; }
        .nav svg { width: 9px; height: 9px; }
        .tab { position: relative; width: 58px; flex: none; margin-left: -1px; }
        .tab svg { position: absolute; left: 0; top: 0; width: 60px; height: 16px; }
        .tab span { position: absolute; left: 9px; top: 0; font: bold 12px "Liberation Sans", sans-serif; letter-spacing: .4px; }
        .gap { width: 343px; flex: none; }
        .split { width: 5px; flex: none; border: 1px solid; border-color: #fff #999 #999 #fff; box-sizing: border-box; }
        .bl { width: 1px; background: #000; flex: none; }
        .btn { width: 14px; flex: none; border: 1px solid; border-color: #fff #999 #999 #fff; box-sizing: border-box; display: flex; align-items: center; justify-content: center; }
        .btn svg { width: 4px; height: 7px; }
        .thumb { width: 229px; flex: none; border: 1px solid; border-color: #fff #999 #999 #fff; box-sizing: border-box; }
        .track { width: 35px; flex: none; }
        .rs { flex: 1; position: relative; }
        .rs svg { position: absolute; right: 0; bottom: 0; width: 13px; height: 13px; }
      </style>
      ${nav.map(p => `<div class="nav"><svg viewBox="0 0 9 9">${p}</svg></div>`).join('')}
      <div class="tab"><svg viewBox="0 0 60 16"><path d="M0 0l6 15h46L58 0z" fill="#fff" stroke="#000"/></svg><span>Sheet1</span></div>
      <div class="gap"></div>
      <div class="split"></div><div class="bl"></div>
      <div class="btn"><svg viewBox="0 0 4 7"><path d="M4 0v7L0 3.500z"/></svg></div><div class="bl"></div>
      <div class="thumb"></div><div class="bl"></div><div class="track"></div>
      <div class="btn"><svg viewBox="0 0 4 7"><path d="M0 0v7l4-3.500z"/></svg></div><div class="bl"></div>
      <div class="split"></div><div class="bl"></div>
      <div class="rs"><svg viewBox="0 0 13 13"><path d="M13 1L1 13M13 5L5 13M13 9l-4 4" stroke="#999"/><path d="M13 2L2 13M13 6l-7 7M13 10l-3 3" stroke="#fff"/></svg></div>`;
  }
}

customElements.define('xl-app', XlApp);
customElements.define('title-bar', TitleBar);
customElements.define('menu-bar', MenuBar);
customElements.define('menu-item', MenuItem);
customElements.define('tool-bar', ToolBar);
customElements.define('tb-btn', TbBtn);
customElements.define('tb-sep', TbSep);
customElements.define('tb-arrow', TbArrow);
customElements.define('tb-text', TbText);
customElements.define('tb-combo', TbCombo);
customElements.define('formula-bar', FormulaBar);
customElements.define('tab-strip', TabStrip);
customElements.define('tab-item', TabItem);
customElements.define('sheet-panel', SheetPanel);
customElements.define('sheet-grid', SheetGrid);
customElements.define('v-scroll', VScroll);
customElements.define('sheet-footer', SheetFooter);
</script>
</body>
</html>
